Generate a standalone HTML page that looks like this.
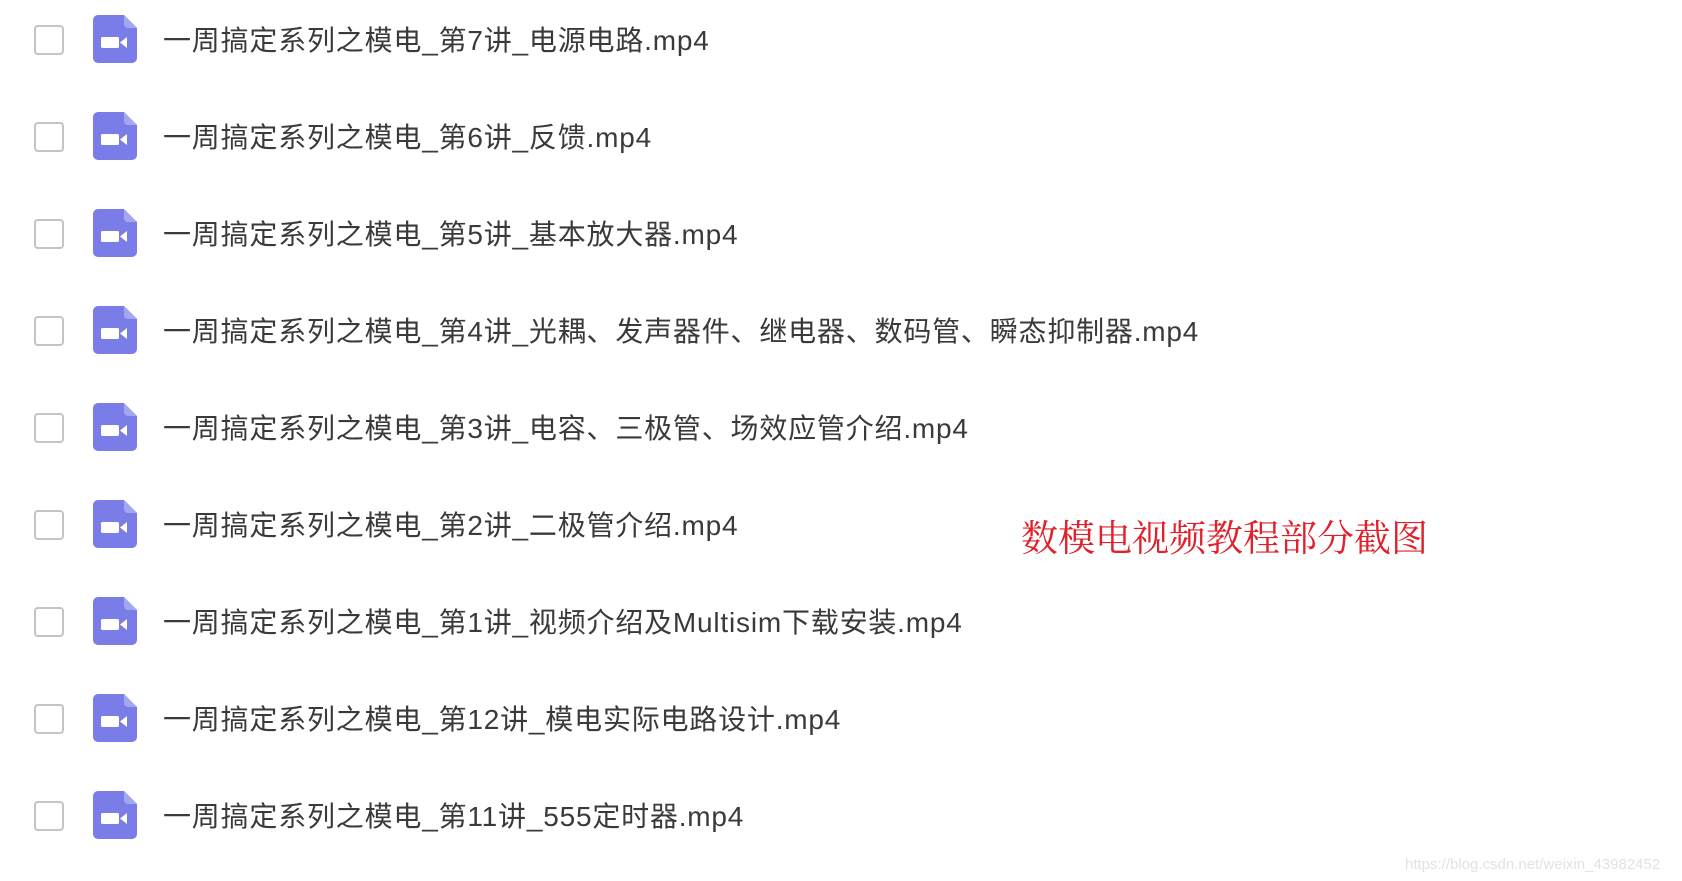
<!DOCTYPE html>
<html><head><meta charset="utf-8"><style>
html,body{margin:0;padding:0;background:#fff;width:1682px;height:881px;overflow:hidden;position:relative}
.row{position:absolute;left:0;height:50px;width:1400px}
.cb{position:absolute;left:34px;top:10px;width:26px;height:26px;border:2px solid #c4c4c4;border-radius:4px}
.ic{position:absolute;left:93px;top:0;width:44px;height:48px}
.t{position:absolute;left:163px;top:8px;font-family:"Liberation Sans","Noto Sans CJK SC",sans-serif;font-size:28px;line-height:36px;color:#3a3a3a;white-space:nowrap;letter-spacing:0.8px}
.red{position:absolute;left:1021px;top:508px;font-family:"Liberation Serif","Noto Serif CJK SC",serif;font-size:37px;color:#e0202a;white-space:nowrap}
.wm{position:absolute;left:1405px;top:856px;font-family:"Liberation Sans",sans-serif;font-size:15px;color:#e2e2e2;white-space:nowrap}
</style></head><body>
<svg width="0" height="0" style="position:absolute"><defs>
<symbol id="vid" viewBox="0 0 44 48"><path d="M5 0H31L44 13V43a5 5 0 0 1-5 5H5a5 5 0 0 1-5-5V5a5 5 0 0 1 5-5z" fill="#7a7de8"/><path d="M31 0V9a4 4 0 0 0 4 4H44z" fill="#a3a6f0"/><rect x="8" y="22" width="18" height="11" rx="1.5" fill="#fff"/><path d="M27 27.5L34 22V33z" fill="#fff"/></symbol>
</defs></svg>
<div class="row" style="top:15px"><div class="cb"></div><svg class="ic"><use href="#vid"/></svg><div class="t">一周搞定系列之模电_第7讲_电源电路.mp4</div></div>
<div class="row" style="top:112px"><div class="cb"></div><svg class="ic"><use href="#vid"/></svg><div class="t">一周搞定系列之模电_第6讲_反馈.mp4</div></div>
<div class="row" style="top:209px"><div class="cb"></div><svg class="ic"><use href="#vid"/></svg><div class="t">一周搞定系列之模电_第5讲_基本放大器.mp4</div></div>
<div class="row" style="top:306px"><div class="cb"></div><svg class="ic"><use href="#vid"/></svg><div class="t">一周搞定系列之模电_第4讲_光耦、发声器件、继电器、数码管、瞬态抑制器.mp4</div></div>
<div class="row" style="top:403px"><div class="cb"></div><svg class="ic"><use href="#vid"/></svg><div class="t">一周搞定系列之模电_第3讲_电容、三极管、场效应管介绍.mp4</div></div>
<div class="row" style="top:500px"><div class="cb"></div><svg class="ic"><use href="#vid"/></svg><div class="t">一周搞定系列之模电_第2讲_二极管介绍.mp4</div></div>
<div class="row" style="top:597px"><div class="cb"></div><svg class="ic"><use href="#vid"/></svg><div class="t">一周搞定系列之模电_第1讲_视频介绍及Multisim下载安装.mp4</div></div>
<div class="row" style="top:694px"><div class="cb"></div><svg class="ic"><use href="#vid"/></svg><div class="t">一周搞定系列之模电_第12讲_模电实际电路设计.mp4</div></div>
<div class="row" style="top:791px"><div class="cb"></div><svg class="ic"><use href="#vid"/></svg><div class="t">一周搞定系列之模电_第11讲_555定时器.mp4</div></div>
<div class="red">数模电视频教程部分截图</div>
<div class="wm">https://blog.csdn.net/weixin_43982452</div>
</body></html>
